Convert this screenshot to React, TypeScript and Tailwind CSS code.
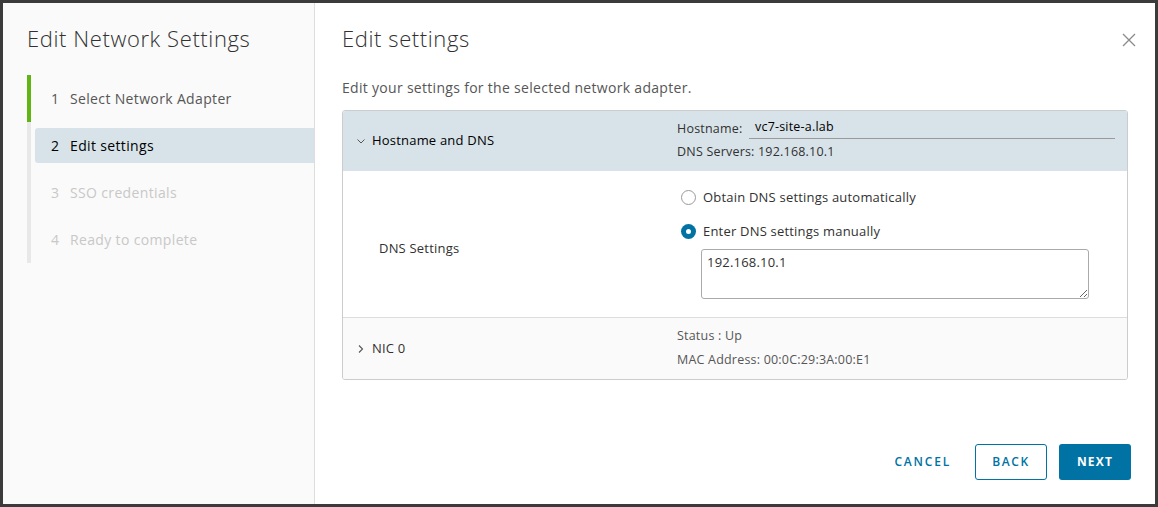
import { useState } from 'react';

const font = { fontFamily: '"Open Sans", "Liberation Sans", sans-serif' };

const steps = [
  { n: 1, label: 'Select Network Adapter', state: 'done' },
  { n: 2, label: 'Edit settings', state: 'active' },
  { n: 3, label: 'SSO credentials', state: 'todo' },
  { n: 4, label: 'Ready to complete', state: 'todo' },
];

function Chevron({ open }: { open: boolean }) {
  return (
    <svg width="10" height="10" viewBox="0 0 10 10" className="text-[#565656]">
      {open ? (
        <path d="M1.5 3.5 L5 7 L8.5 3.5" fill="none" stroke="currentColor" strokeWidth="1" />
      ) : (
        <path d="M3 1.5 L6.5 5 L3 8.5" fill="none" stroke="currentColor" strokeWidth="1.1" />
      )}
    </svg>
  );
}

function Radio({ checked, label, onClick }: { checked: boolean; label: string; onClick: () => void }) {
  return (
    <button onClick={onClick} className="flex items-center gap-[7px] text-[13px] leading-[16px] tracking-[0.2px] text-[#313131]">
      <span
        className={`w-[15px] h-[15px] rounded-full flex items-center justify-center ${
          checked ? 'bg-[#0072a3]' : 'border border-[#9a9a9a] bg-white'
        }`}
      >
        {checked && <span className="w-[5px] h-[5px] rounded-full bg-white"></span>}
      </span>
      {label}
    </button>
  );
}

export default function App() {
  const [manual, setManual] = useState(true);
  const [dns, setDns] = useState('192.168.10.1');

  return (
    <div className="w-[1158px] h-[507px] bg-[#3b3b3b] p-[3px]" style={font}>
      <div className="w-full h-full flex bg-white">
        {/* Left: wizard steps */}
        <div className="w-[312px] flex-shrink-0 bg-[#fafafa] border-r border-[#dddddd] pl-[24px] pt-[20px]">
          <h1 className="text-[22px] font-light text-[#313131] leading-[30px] tracking-[0.6px]">Edit Network Settings</h1>
          <div className="mt-[22px] flex flex-col">
            {steps.map(s => (
              <div
                key={s.n}
                className={`h-[47px] border-l-4 pl-[4px] py-[6px] ${
                  s.state === 'done' ? 'border-[#60b515]' : 'border-[#e8e8e8]'
                }`}
              >
                <div
                  className={`h-full flex items-center pl-[16px] text-[14px] tracking-[0.35px] rounded-l-[3px] ${
                    s.state === 'active'
                      ? 'bg-[#d8e3e9] text-[#000]'
                      : s.state === 'done'
                      ? 'text-[#565656]'
                      : 'text-[#c8c8c8]'
                  }`}
                >
                  <span className="w-[19px]">{s.n}</span>
                  <span>{s.label}</span>
                </div>
              </div>
            ))}
          </div>
        </div>

        {/* Right: content */}
        <div className="flex-1 flex flex-col pl-[27px] pr-[24px] pt-[20px] pb-[24px]">
          <div className="flex items-start justify-between">
            <h2 className="text-[22px] font-light text-[#313131] leading-[30px] tracking-[0.6px]">Edit settings</h2>
            <button className="mt-[9px] mr-[-6px] text-[#8a8a8a]">
              <svg width="16" height="16" viewBox="0 0 16 16">
                <path d="M2 2 L14 14 M14 2 L2 14" stroke="currentColor" strokeWidth="1.3" />
              </svg>
            </button>
          </div>

          <p className="mt-[25px] text-[14px] text-[#565656] leading-[20px] tracking-[0.3px]">
            Edit your settings for the selected network adapter.
          </p>

          {/* Stack view */}
          <div className="mt-[12px] mr-[3px] border border-[#cccccc] rounded-[3px] overflow-hidden tracking-[0.2px]">
            <div className="h-[60px] flex bg-[#d8e3e9]">
              <div className="w-[334px] flex items-center gap-[6px] pl-[13px] text-[13px] font-medium text-[#000]">
                <Chevron open={true} />
                Hostname and DNS
              </div>
              <div className="flex-1 flex flex-col justify-center pr-[12px] pb-[2px] text-[12.5px] text-[#313131]">
                <div className="flex items-end">
                  <span className="w-[72px]">Hostname:</span>
                  <div className="flex-1 border-b border-[#9a9a9a] pl-[6px] pb-[1px] text-[#000]">vc7-site-a.lab</div>
                </div>
                <div className="mt-[4px]">DNS Servers: 192.168.10.1</div>
              </div>
            </div>

            <div className="h-[147px] flex border-b border-[#dddddd] bg-white">
              <div className="w-[334px] flex items-center pl-[36px] pt-[10px] text-[13px] font-medium text-[#313131]">
                DNS Settings
              </div>
              <div className="flex-1 flex flex-col pt-[18px] pl-[4px]">
                <Radio checked={!manual} label="Obtain DNS settings automatically" onClick={() => setManual(false)} />
                <div className="mt-[18px]">
                  <Radio checked={manual} label="Enter DNS settings manually" onClick={() => setManual(true)} />
                </div>
                <textarea
                  value={dns}
                  onChange={e => setDns(e.target.value)}
                  className="mt-[10px] ml-[20px] w-[388px] h-[50px] border border-[#aaaaaa] rounded-[3px] px-[5px] py-[3px] text-[13px] text-[#313131] leading-[18px] focus:outline-none"
                />
              </div>
            </div>

            <div className="h-[61px] flex bg-[#fafafa]">
              <div className="w-[334px] flex items-center gap-[6px] pl-[13px] text-[13px] text-[#313131]">
                <Chevron open={false} />
                NIC 0
              </div>
              <div className="flex-1 flex flex-col justify-center gap-[5px] pb-[1px] text-[12.5px] text-[#565656]">
                <div>Status : Up</div>
                <div>MAC Address: 00:0C:29:3A:00:E1</div>
              </div>
            </div>
          </div>

          {/* Footer */}
          <div className="mt-auto flex justify-end items-center gap-[12px]">
            <button className="h-[36px] px-[12px] text-[12px] font-semibold tracking-[1.8px] text-[#0072a3]">
              CANCEL
            </button>
            <button className="h-[36px] w-[72px] border border-[#0072a3] rounded-[3px] text-[12px] font-semibold tracking-[1.6px] text-[#0072a3] bg-white">
              BACK
            </button>
            <button className="h-[36px] w-[72px] rounded-[3px] bg-[#0072a3] text-[12px] font-bold tracking-[1.2px] text-white">
              NEXT
            </button>
          </div>
        </div>
      </div>
    </div>
  );
}
